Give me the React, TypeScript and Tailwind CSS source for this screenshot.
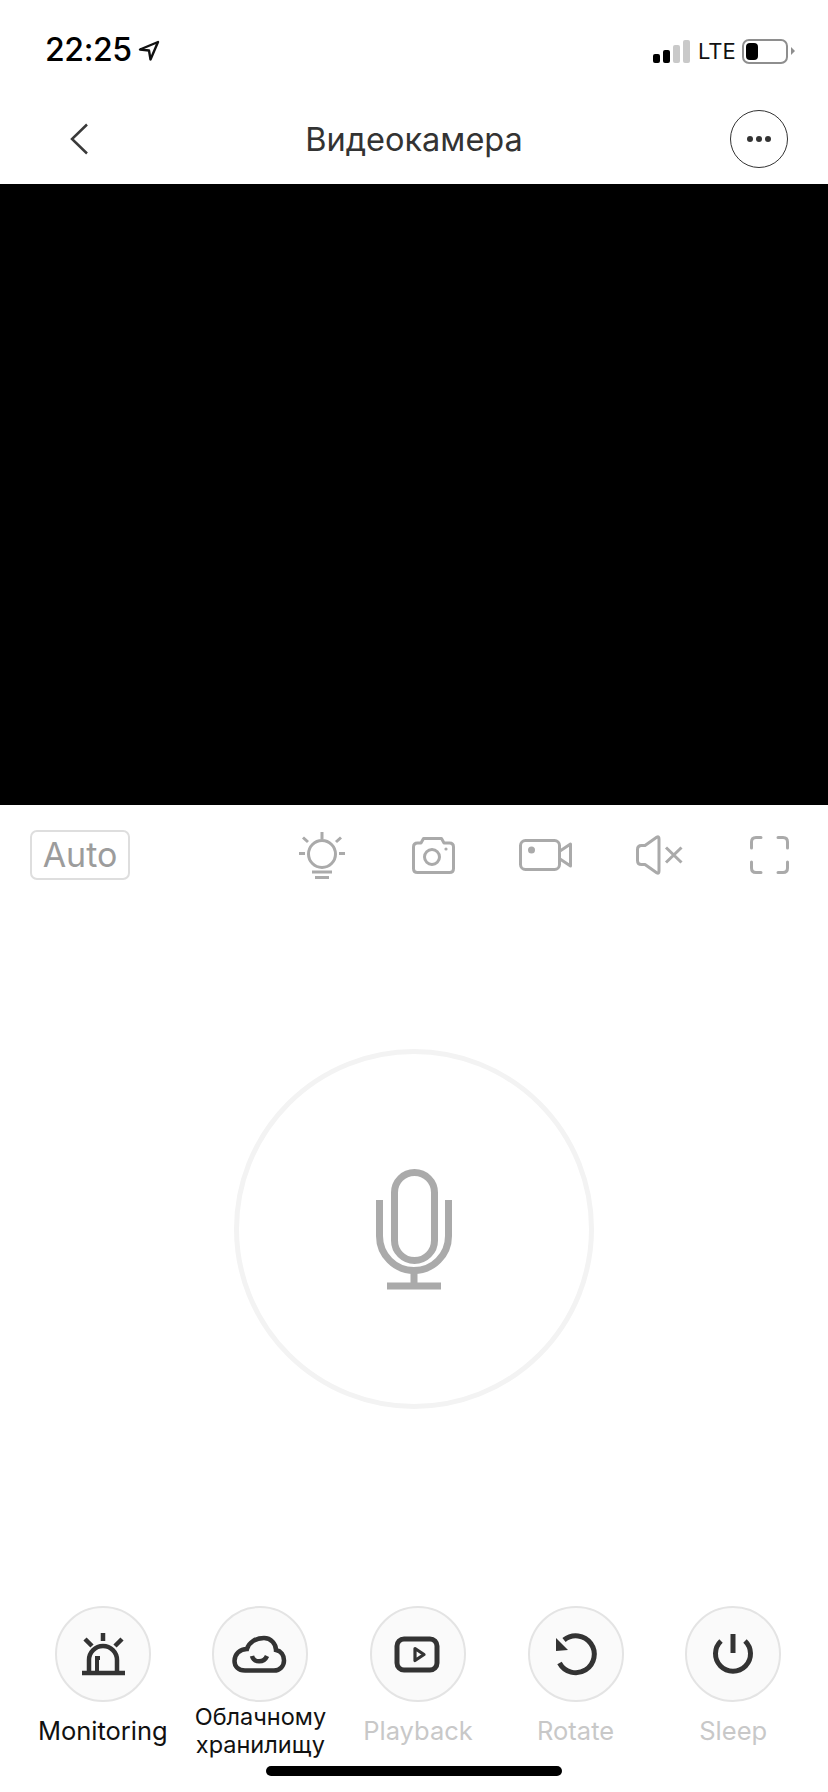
import React from "react";

const font = { fontFamily: "Inter, 'Liberation Sans', sans-serif" };

function Round({ children }: { children: React.ReactNode }) {
  return (
    <div className="w-[96px] h-[96px] rounded-full border-2 border-[#e4e4e4] bg-[#fafafa] shrink-0">
      <svg viewBox="2 2 92 92" width="92" height="92" fill="none" stroke="#333" strokeWidth="4.5">
        {children}
      </svg>
    </div>
  );
}

function Tool({ label, active, icon }: { label: React.ReactNode; active?: boolean; icon: React.ReactNode }) {
  return (
    <div className="flex flex-col items-center">
      <Round>{icon}</Round>
      <div className={`h-[58px] flex items-center justify-center text-center ${active ? "text-[#111]" : "text-[#c8c8c8]"}`}>{label}</div>
    </div>
  );
}

export default function App() {
  return (
    <div className="w-[828px] h-[1792px] bg-white overflow-hidden" style={font}>
      {/* status bar */}
      <div className="h-[92px] flex items-start pt-[32px] pl-[45px] pr-[33px] justify-between">
        <div className="flex items-center gap-[6px] h-[36px]">
          <span className="text-[32px] leading-none font-medium text-black tracking-[-0.4px]">22:25</span>
          <svg width="22" height="21" viewBox="0 0 22 21" fill="none" stroke="#111" strokeWidth="2.4" strokeLinejoin="round">
            <path d="M2 9.5 L20 2 L12.5 19.5 L11 10.5 Z" />
          </svg>
        </div>
        <div className="flex items-center h-[36px] mt-[1px]">
          <div className="flex items-end gap-[3px] h-[23px] mr-[8px]">
            <div className="w-[7px] h-[9px] rounded-[2px] bg-black" />
            <div className="w-[7px] h-[13px] rounded-[2px] bg-black" />
            <div className="w-[7px] h-[18px] rounded-[2px] bg-[#c9c9c9]" />
            <div className="w-[7px] h-[23px] rounded-[2px] bg-[#c9c9c9]" />
          </div>
          <span className="text-[22px] leading-none text-[#111] w-[36px] mr-[8px]">LTE</span>
          <div className="w-[46px] h-[25px] rounded-[7px] border-2 border-[#8e8e8e] p-[2px] flex">
            <div className="w-[12px] h-full rounded-[4px] bg-black" />
          </div>
          <div className="w-0 h-0 ml-[3px] border-y-[4px] border-y-transparent border-l-[4px] border-l-[#8e8e8e]" />
        </div>
      </div>

      {/* header */}
      <div className="h-[92px] grid grid-cols-[1fr_auto_1fr] items-center px-[40px] pt-[2px]">
        <div className="pl-[29px]">
          <svg width="20" height="32" viewBox="0 0 20 32" fill="none" stroke="#3a3a3a" strokeWidth="2.5">
            <path d="M18 1.5 L3 16 L18 30.5" />
          </svg>
        </div>
        <div className="text-[32.5px] leading-none text-[#333] pt-[2px]">Видеокамера</div>
        <div className="flex justify-end">
          <div className="w-[58px] h-[58px] rounded-full border-[1.5px] border-[#333] flex items-center justify-center gap-[3px]">
            <div className="w-[6px] h-[6px] rounded-full bg-[#333]" />
            <div className="w-[6px] h-[6px] rounded-full bg-[#333]" />
            <div className="w-[6px] h-[6px] rounded-full bg-[#333]" />
          </div>
        </div>
      </div>

      {/* video */}
      <div className="h-[621px] bg-black" />

      {/* controls */}
      <div className="h-[75px] pt-[25px] pl-[30px] flex items-center">
        <div className="w-[100px] h-[50px] rounded-[7px] border-2 border-[#dedede] flex items-center justify-center text-[34px] leading-none text-[#9c9c9c]">Auto</div>
        <svg className="ml-[169px]" width="46" height="47" viewBox="0 0 46 47" fill="none" stroke="#aaa" strokeWidth="3">
          <circle cx="23" cy="22" r="13.5" />
          <path d="M23 0 V7 M4 5.5 L9 10 M42 5.5 L37 10 M0 21.5 H6 M40 21.5 H46 M13 40 H33 M16 45.5 H30" />
        </svg>
        <svg className="ml-[67px]" width="43" height="37" viewBox="0 0 43 37" fill="none" stroke="#aaa" strokeWidth="3" strokeLinejoin="round">
          <path d="M1.5 10 Q1.5 6 5.5 6 H9 L11.5 1.5 H29.5 L32 6 H37.5 Q41.5 6 41.5 10 V31.5 Q41.5 35.5 37.5 35.5 H5.5 Q1.5 35.5 1.5 31.5 Z" />
          <circle cx="20" cy="20" r="7.5" />
          <circle cx="34" cy="12" r="1.6" fill="#aaa" stroke="none" />
        </svg>
        <svg className="ml-[64px]" width="53" height="32" viewBox="0 0 53 32" fill="none" stroke="#aaa" strokeWidth="3" strokeLinejoin="round">
          <rect x="1.5" y="1.5" width="39" height="29" rx="5" />
          <path d="M41 12 L51.5 5 V27 L41 20" />
          <circle cx="12.5" cy="11" r="3.5" fill="#aaa" stroke="none" />
        </svg>
        <svg className="ml-[64px]" width="47" height="40" viewBox="0 0 47 40" fill="none" stroke="#aaa" strokeWidth="3" strokeLinejoin="round">
          <path d="M21 2 Q23 1 23 4 V36 Q23 39 21 38 L9 29.5 H5.5 Q1.5 29.5 1.5 25.5 V14.5 Q1.5 10.5 5.5 10.5 H9 Z" />
          <path d="M30 12.5 L45.5 27.5 M45.5 12.5 L30 27.5" />
        </svg>
        <svg className="ml-[67px]" width="39" height="38" viewBox="0 0 39 38" fill="none" stroke="#aaa" strokeWidth="3" strokeLinecap="round">
          <path d="M1.5 12 V6 Q1.5 1.5 6 1.5 H11 M28 1.5 H33 Q37.5 1.5 37.5 6 V12 M1.5 26 V32 Q1.5 36.5 6 36.5 H11 M28 36.5 H33 Q37.5 36.5 37.5 32 V26" />
        </svg>
      </div>

      {/* talk button */}
      <div className="mt-[169px] mx-auto w-[360px] h-[360px] rounded-full border-[5px] border-[#f3f3f3] flex items-center justify-center">
        <svg className="mb-[-1px]" width="76" height="121" viewBox="0 0 76 121" fill="none" stroke="#aaa" strokeWidth="7">
          <rect x="18.5" y="3.5" width="40" height="88" rx="20" />
          <path d="M3.5 31 V67 A34.5 34.5 0 0 0 72.5 67 V31" />
          <path d="M38 102 V115 M11 117 H65" />
        </svg>
      </div>

      {/* bottom tools */}
      <div className="mt-[197px] pl-[24px] pr-[16px] grid grid-cols-5 text-[25.5px] leading-[28px]">
        <Tool
          active
          label="Monitoring"
          icon={
            <>
              <path d="M27 67 H70" />
              <path d="M34 66 V54 A14 14 0 0 1 62 54 V66" />
              <path d="M42 66 V52 H45" strokeWidth="4" />
              <path d="M48 27 V35 M30 33 L37 40 M67 33 L60 40" />
            </>
          }
        />
        <Tool
          active
          label={<span className="text-[23.5px] leading-[28px] block">Облачному<br />хранилищу</span>}
          icon={
            <>
              <path d="M33 64.5 C26 64.5 22.5 60 22.5 55 C22.5 48 28 43 35 43 C37 36 44 32 52 32 C59 32 64 38 64 44 C69 45 72 49 72 54.5 C72 60 68 64.5 62 64.5 Z" />
              <path d="M40 50 C42 57 52 57 55 50" />
            </>
          }
        />
        <Tool
          label="Playback"
          icon={
            <>
              <rect x="27" y="33" width="40" height="31" rx="7" strokeWidth="5" />
              <path d="M45 42.5 L54 48.5 L45 54.5 Z" strokeWidth="3.2" strokeLinejoin="round" />
            </>
          }
        />
        <Tool
          label="Rotate"
          icon={
            <>
              <path d="M36 34 A18.5 18.5 0 1 1 31.5 57" strokeWidth="5" />
              <path d="M28 32 V45 L40 44 Z" fill="#333" stroke="none" />
            </>
          }
        />
        <Tool
          label="Sleep"
          icon={
            <>
              <path d="M36 35 A17.5 17.5 0 1 0 60 35" strokeWidth="5" />
              <path d="M48 28 V47" strokeWidth="5" />
            </>
          }
        />
      </div>

      {/* home indicator */}
      <div className="mt-[6px] mx-auto w-[296px] h-[10px] rounded-full bg-black" />
    </div>
  );
}
